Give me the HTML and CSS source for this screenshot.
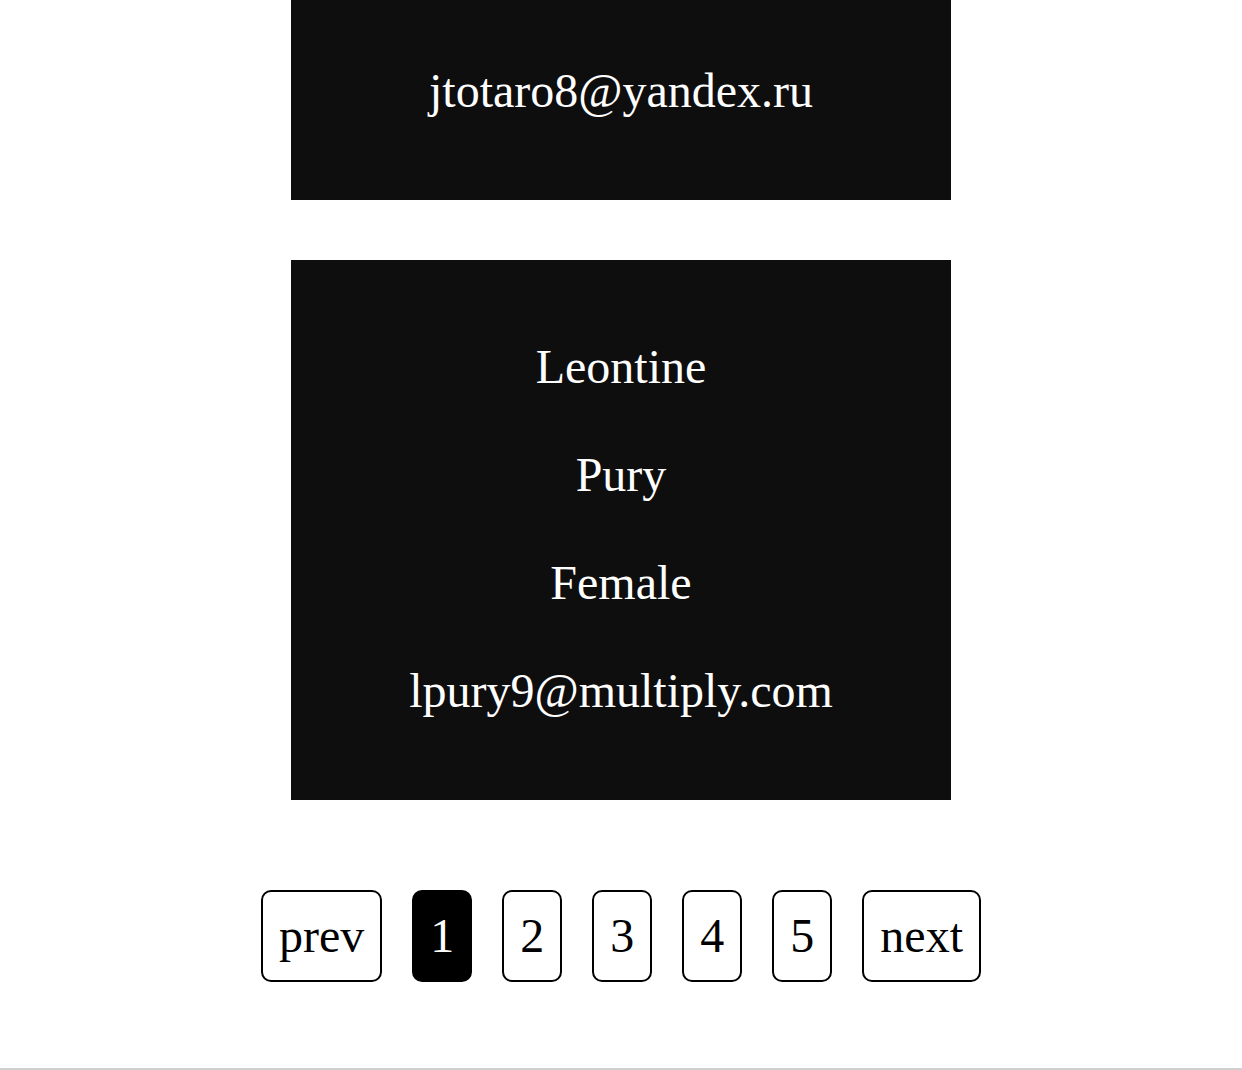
FILE: index.html
```html
<!DOCTYPE html>
<html lang="en">
<head>
<meta charset="utf-8">
<title>Users</title>
<link rel="stylesheet" href="styles.css">
</head>
<body>
<main class="page">
  <section class="users">
    <article class="card card-partial">
      <p class="field">jtotaro8@yandex.ru</p>
    </article>
    <article class="card">
      <p class="field">Leontine</p>
      <p class="field">Pury</p>
      <p class="field">Female</p>
      <p class="field">lpury9@multiply.com</p>
    </article>
  </section>
  <nav class="pager">
    <button class="pg">prev</button>
    <button class="pg active">1</button>
    <button class="pg">2</button>
    <button class="pg">3</button>
    <button class="pg">4</button>
    <button class="pg">5</button>
    <button class="pg">next</button>
  </nav>
  <div class="rule"></div>
</main>
</body>
</html>
```
FILE: styles.css
```css
html, body {
  margin: 0;
  padding: 0;
  background: #ffffff;
  overflow: hidden;
}

body {
  font-family: "Liberation Serif", "Times New Roman", serif;
  color: #000;
}

.page {
  display: flex;
  flex-direction: column;
}

.users {
  display: flex;
  flex-direction: column;
  align-items: center;
  gap: 60px;
}

.card {
  width: 660px;
  box-sizing: border-box;
  background: #0f0e0f;
  color: #ffffff;
  padding: 79px 0 81px;
  display: flex;
  flex-direction: column;
  align-items: center;
  gap: 52px;
}

.card-partial {
  padding-top: 63px;
}

.field {
  margin: 0;
  font-size: 48px;
  line-height: 56px;
  text-align: center;
}

.pager {
  margin-top: 90px;
  display: flex;
  justify-content: center;
  gap: 30px;
}

.pg {
  font-family: "Liberation Serif", "Times New Roman", serif;
  font-size: 48px;
  line-height: normal;
  padding: 16px 16px 17px;
  border: 2px solid #000;
  border-radius: 10px;
  background: #fff;
  color: #000;
  margin: 0;
}

.pg.active {
  background: #000;
  color: #fff;
}

.rule {
  margin-top: 86px;
  height: 2px;
  background: #d0d0d0;
}
```
